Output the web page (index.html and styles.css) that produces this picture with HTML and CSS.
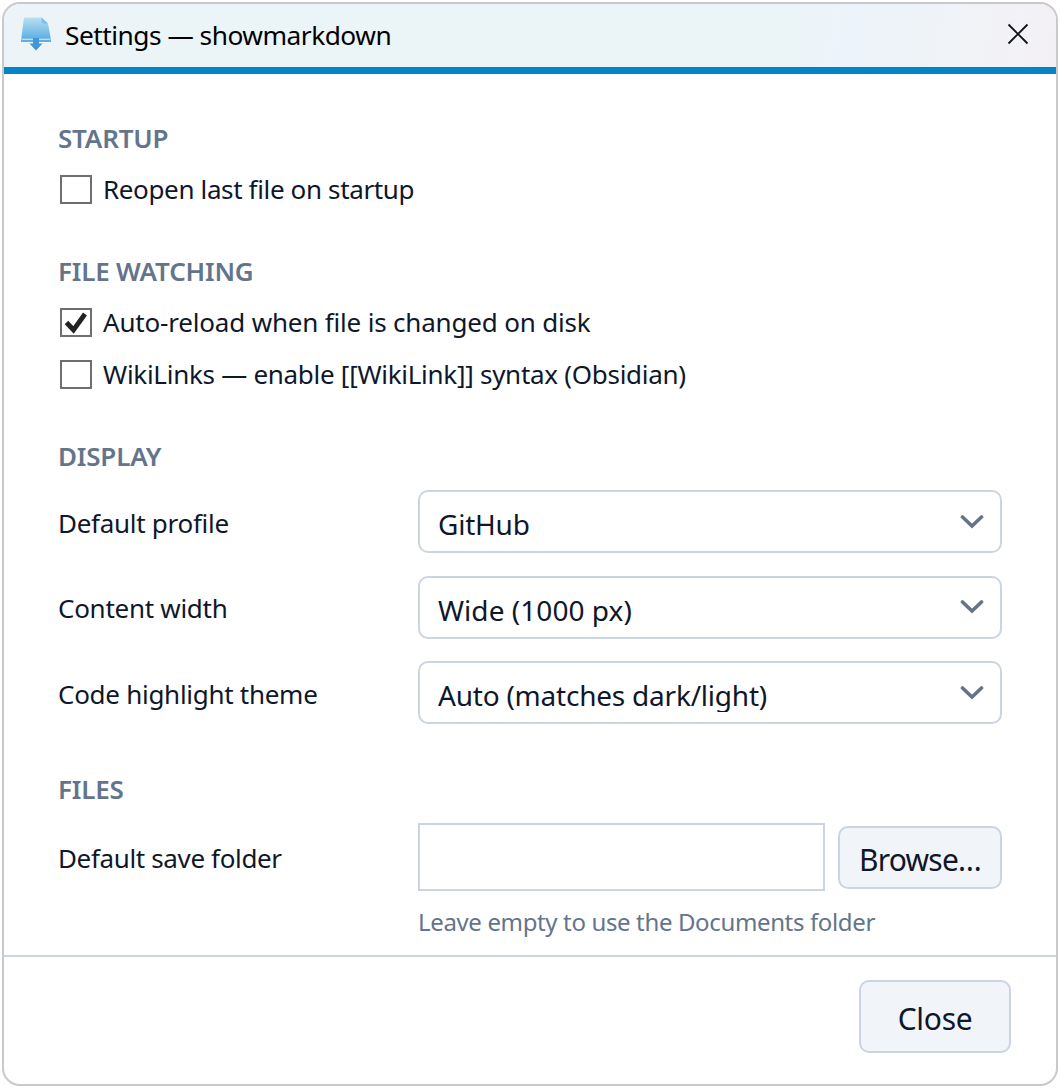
FILE: index.html
```html
<!DOCTYPE html>
<html lang="en">
<head>
<meta charset="utf-8">
<title>Settings — showmarkdown</title>
<link rel="stylesheet" href="styles.css">
</head>
<body>
<div class="window">
  <header class="titlebar">
    <svg class="app-icon" width="32" height="36" viewBox="0 0 32 36">
      <defs>
        <linearGradient id="page" x1="0" y1="0" x2="0" y2="1">
          <stop offset="0" stop-color="#b9e0f3"/>
          <stop offset="1" stop-color="#5fafe3"/>
        </linearGradient>
      </defs>
      <path d="M5 0.500H21.500L28 6.500L30.500 20V21.500H1.500V20L3.700 2.500Q3.900 0.500 5 0.500Z" fill="url(#page)"/>
      <path d="M21.500 0.500V4.500Q22 6.500 24 6.500H28Z" fill="#7fc0e8"/>
      <path d="M1 21.500H31V25H1Z" fill="#62aee2"/>
      <path d="M1.500 22.500H30.500" stroke="#b9def4" stroke-width="1"/>
      <path d="M13 21H19V26.500H22.500L16 33.500L9.500 26.500H13Z" fill="#4396d4"/>
    </svg>
    <h1 class="title">Settings — showmarkdown</h1>
    <svg class="close-icon" width="22" height="22" viewBox="0 0 22 22"><path d="M1.500 1.500L20.500 20.500M20.500 1.500L1.500 20.500" /></svg>
  </header>
  <main class="content">
    <section class="section">
      <h2 class="heading">STARTUP</h2>
      <label class="check"><span class="box"></span><span class="tight">Reopen last file on startup</span></label>
    </section>
    <section class="section">
      <h2 class="heading">FILE WATCHING</h2>
      <label class="check"><span class="box"><svg width="28" height="25" viewBox="0 0 28 25"><path d="M4.500 12.500L11.500 20L23 4" fill="none" stroke="#222" stroke-width="4.800"/></svg></span><span class="loose">Auto-reload when file is changed on disk</span></label>
      <label class="check"><span class="box"></span><span>WikiLinks — enable [[WikiLink]] syntax (Obsidian)</span></label>
    </section>
    <section class="section display">
      <h2 class="heading">DISPLAY</h2>
      <div class="field"><span class="label">Default profile</span>
        <div class="select"><span class="value">GitHub</span><svg class="chevron" width="24" height="16" viewBox="0 0 24 16"><path d="M2.500 3L12 12L21.500 3" /></svg></div></div>
      <div class="field"><span class="label">Content width</span>
        <div class="select"><span class="value wide">Wide (1000 px)</span><svg class="chevron" width="24" height="16" viewBox="0 0 24 16"><path d="M2.500 3L12 12L21.500 3" /></svg></div></div>
      <div class="field"><span class="label">Code highlight theme</span>
        <div class="select"><span class="value">Auto (matches dark/light)</span><svg class="chevron" width="24" height="16" viewBox="0 0 24 16"><path d="M2.500 3L12 12L21.500 3" /></svg></div></div>
    </section>
    <section class="section files">
      <h2 class="heading">FILES</h2>
      <div class="field folder"><span class="label tight">Default save folder</span>
        <div class="path"></div><div class="button browse">Browse…</div></div>
      <p class="hint">Leave empty to use the Documents folder</p>
    </section>
  </main>
  <footer class="footer"><div class="button close">Close</div></footer>
</div>
</body>
</html>
```
FILE: styles.css
```css
* { box-sizing: border-box; }
body {
  margin: 0;
  padding: 2px;
  height: 1089px;
  overflow: hidden;
  background: #fff;
  color: #0f172a;
  font: 26px/34px "Noto Sans", "Open Sans", sans-serif;
  letter-spacing: -0.28px;
  white-space: nowrap;
}
.window {
  display: flex;
  flex-direction: column;
  width: 1056px;
  height: 1084px;
  border: 2px solid #c9c9cb;
  border-radius: 18px;
  background: #fff;
  overflow: hidden;
}
.titlebar {
  display: flex;
  align-items: center;
  flex: none;
  height: 70px;
  padding: 0 27px 0 16px;
  border-bottom: 7px solid #0284c7;
  background: linear-gradient(100deg, #ecf4f8 0%, #ebf4f7 75%, #edf3fb 80%, #eef3f8 86%, #f2f2f6 94%, #f3f0f5 100%);
}
.title {
  margin: 0 auto 1px 13px;
  font-size: 26.3px;
  font-weight: 400;
  letter-spacing: -0.5px;
  color: #000;
}
.close-icon { margin-bottom: 3px; fill: none; stroke: #10131c; stroke-width: 1.9; }
.app-icon { margin-bottom: 1px; }
.content { flex: none; height: 881px; padding: 47px 54px 0; }
.section { margin-bottom: 39px; }
.heading {
  margin: 0 0 8px;
  font-size: 26px;
  line-height: 34px;
  font-weight: 600;
  letter-spacing: -0.2px;
  color: #64748b;
}
.check { display: flex; align-items: center; height: 52px; padding-left: 2px; gap: 11px; }
.tight { letter-spacing: -0.36px; }
.loose { letter-spacing: -0.18px; }
.box { width: 32px; height: 29px; border: 2px solid #6e6e6e; }
.box svg { display: block; }
.display { margin-bottom: 48px; }
.files { margin-bottom: 0; }
.display .heading, .files .heading { margin-bottom: 17px; }
.field {
  display: grid;
  grid-template-columns: 360px 584px;
  align-items: center;
  height: 63px;
  margin-bottom: 22.5px;
}
.label { padding-top: 2px; }
.display .field:last-child { margin-bottom: 0; }
.select {
  display: flex;
  align-items: center;
  justify-content: space-between;
  height: 63px;
  padding: 0 16px 0 18px;
  border: 2px solid #cbd5e1;
  border-radius: 10px;
}
.value {
  align-self: flex-start;
  height: 36px;
  margin-top: 13px;
  line-height: 38px;
  font-size: 28px;
  letter-spacing: -0.22px;
  overflow: hidden;
}
.value.wide { letter-spacing: 0.05px; }
.chevron { fill: none; stroke: #64748b; stroke-width: 3.6; stroke-linecap: round; }
.folder { grid-template-columns: 360px 407px 177px; height: 68px; margin-bottom: 14px; }
.path { height: 68px; border: 2px solid #cbd5e1; }
.button {
  display: flex;
  align-items: center;
  justify-content: center;
  border: 2px solid #cbd5e1;
  border-radius: 10px;
  background: #f1f5f9;
  font-size: 30px;
}
.browse { height: 63px; margin-left: 13px; width: 164px; padding-top: 5px; letter-spacing: -0.75px; }
.hint { margin: 0 0 0 360px; color: #64748b; font-size: 24px; letter-spacing: -0.36px; }
.footer {
  flex: 1;
  display: flex;
  justify-content: flex-end;
  padding: 23px 45px;
  border-top: 2px solid #cbd5e1;
}
.close { width: 152px; height: 73px; padding-top: 4px; }
```
